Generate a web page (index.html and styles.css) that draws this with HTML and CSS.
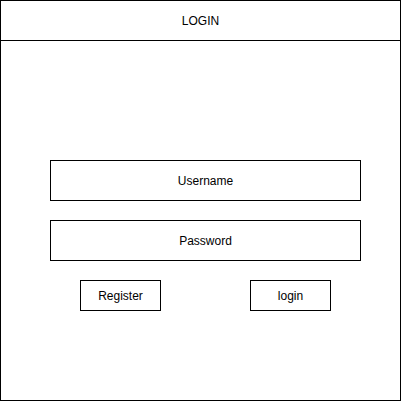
FILE: index.html
```html
<!DOCTYPE html>
<html lang="en">
<head>
    <meta charset="UTF-8">
    <title>Login</title>
    <link rel="stylesheet" href="styles.css">
</head>
<body>
    <div class="frame">
        <header class="title-bar">LOGIN</header>
        <main class="login-area">
            <div class="field">Username</div>
            <div class="field">Password</div>
            <div class="actions">
                <div class="btn">Register</div>
                <div class="btn">login</div>
            </div>
        </main>
    </div>
</body>
</html>
```

FILE: styles.css
```css
body {
    margin: 0;
    font-family: 'Liberation Sans', Arial, sans-serif;
    font-size: 12px;
    color: #000;
    background: #fff;
}

.frame {
    width: 401px;
    height: 401px;
    box-sizing: border-box;
    border: 1px solid #000;
}

.title-bar {
    height: 39px;
    border-bottom: 1px solid #000;
    display: flex;
    align-items: center;
    justify-content: center;
}

.login-area {
    padding: 119px 0 0 49px;
    display: flex;
    flex-direction: column;
    gap: 19px;
}

.field {
    width: 311px;
    height: 41px;
    box-sizing: border-box;
    border: 1px solid #000;
    display: flex;
    align-items: center;
    justify-content: center;
}

.actions {
    display: flex;
    gap: 89px;
    padding-left: 30px;
}

.btn {
    width: 81px;
    height: 31px;
    box-sizing: border-box;
    border: 1px solid #000;
    display: flex;
    align-items: center;
    justify-content: center;
}
```
